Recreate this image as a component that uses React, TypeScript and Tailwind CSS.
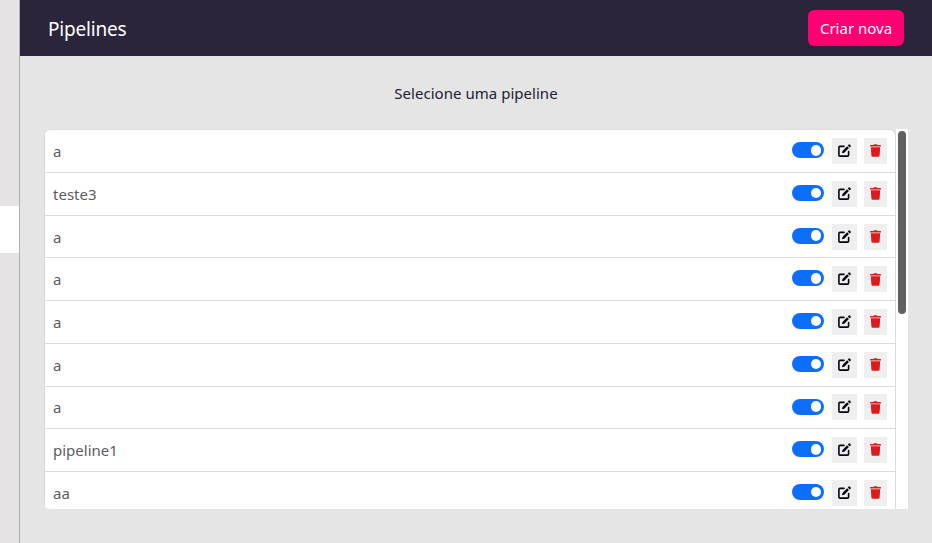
import React from "react";

const pipelines = ["a", "teste3", "a", "a", "a", "a", "a", "pipeline1", "aa"];

function EditIcon() {
  return (
    <svg viewBox="0 0 13 13" className="size-[13px]" fill="none">
      <path
        d="M6 2.4H2Q.9 2.4.9 3.5V11Q.9 12.1 2 12.1H9.5Q10.6 12.1 10.6 11V7.6"
        stroke="currentColor"
        strokeWidth="1.6"
        strokeLinecap="round"
      />
      <path
        d="M4.5 6.9 9.1 2.3 10.9 4.1 6.3 8.7 4 9.3ZM9.8 1.6 10.8.6Q11.3.1 11.8.6L12.7 1.5Q13.1 2 12.7 2.5L11.7 3.4Z"
        fill="currentColor"
      />
    </svg>
  );
}

function TrashIcon() {
  return (
    <svg viewBox="0 0 11 13" className="h-[13px] w-[11px]" fill="currentColor">
      <path d="M3.5.9 4 .2H7L7.5.9H10.4Q11 .9 11 1.5V2.4H0V1.5Q0 .9.6.9Z" />
      <path d="M.8 3.2H10.2L9.6 11.6Q9.5 12.8 8.4 12.8H2.6Q1.5 12.8 1.4 11.6Z" />
    </svg>
  );
}

function Toggle() {
  return (
    <span className="mt-[-1.8px] flex h-4 w-8 items-center justify-end rounded-full bg-[#0d6efd] pr-[3px]">
      <span className="size-[10.5px] rounded-full bg-white" />
    </span>
  );
}

function Row({ name }: { name: string }) {
  return (
    <li className="flex h-[42.72px] shrink-0 items-center border-b border-[#dcdcdc] pr-2 pl-2">
      <span className="mt-[0.4px] flex-1 text-[15px] text-[#5c5c60]">{name}</span>
      <Toggle />
      <button aria-label="Editar" className="ml-2 flex h-[26px] w-[25px] items-center justify-center bg-[#efefef] pb-[1px] text-[#05030f]">
        <EditIcon />
      </button>
      <button aria-label="Excluir" className="ml-[7px] flex h-[26px] w-[23px] items-center justify-center bg-[#efefef] pb-[0.6px] text-[#dc1c1c]">
        <TrashIcon />
      </button>
    </li>
  );
}

export default function App() {
  return (
    <div className="flex h-[543px] w-[932px] overflow-hidden bg-[#e5e5e5] font-['Noto_Sans',sans-serif]">
      <aside className="w-5 shrink-0 border-r border-[#b0aeb0] bg-[#e5e3e4] pt-[206px]">
        <div className="h-[47px] bg-white" />
      </aside>
      <main className="flex flex-1 flex-col">
        <header className="flex h-14 items-center justify-between bg-[#2b253b] px-7">
          <h1 className="mt-[2px] text-[19px] tracking-[-0.2px] text-white">Pipelines</h1>
          <button className="h-9 w-24 rounded-md bg-[#ff0073] text-[15px] whitespace-nowrap text-white">Criar nova</button>
        </header>
        <p className="mt-[26px] h-[23px] text-center text-[15px] leading-[23px] tracking-[0.03px] text-[#212035]">Selecione uma pipeline</p>
        <section className="mt-6 ml-6 flex h-[380px] w-[864px] overflow-hidden rounded-l-md">
          <ul className="flex w-[852px] flex-col rounded-t-md border border-b-0 border-[#dcdcdc] bg-white pt-[0.3px]">
            {pipelines.map((name, i) => (
              <Row key={i} name={name} />
            ))}
          </ul>
          <div className="flex flex-1 justify-center bg-white pt-[2px]">
            <div className="h-[183px] w-2 rounded-full bg-[#606060]" />
          </div>
        </section>
      </main>
    </div>
  );
}
